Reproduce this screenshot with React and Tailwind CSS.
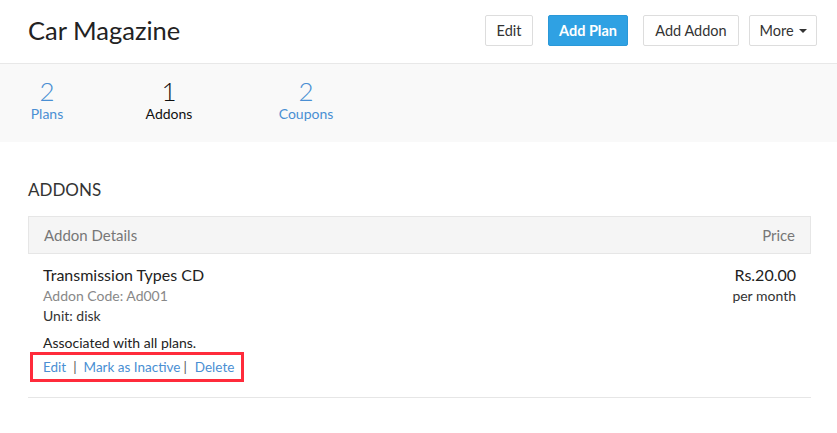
import React from "react";

const font = { fontFamily: "Lato, 'Open Sans', Arial, sans-serif" };

const stats = [
  { value: 2, label: "Plans", active: false, width: "w-[44px]", ml: "ml-[25px]" },
  { value: 1, label: "Addons", active: true, width: "w-[60px]", ml: "ml-[70px]" },
  { value: 2, label: "Coupons", active: false, width: "w-[70px]", ml: "ml-[72px]" },
];

const App = () => {
  return (
    <div className="w-[837px] h-[433px] bg-white text-[#222]" style={font}>
      {/* Header */}
      <div className="h-[64px] pb-[2px] flex items-center border-b border-[#e8e8e8] pl-[28px] pr-[20px]">
        <h1 className="text-[25.5px] leading-none text-[#222] flex-1">Car Magazine</h1>
        <button className="w-[48px] h-[31px] border border-[#dddddd] rounded-[2px] bg-white text-[14.5px] text-[#333]">
          Edit
        </button>
        <button className="ml-[15px] w-[80px] h-[31px] rounded-[2px] bg-[#2fa1e3] border border-[#2a98d8] text-[14.5px] font-bold text-white">
          Add Plan
        </button>
        <button className="ml-[15px] w-[96px] h-[31px] border border-[#dddddd] rounded-[2px] bg-white text-[14.5px] text-[#333]">
          Add Addon
        </button>
        <button className="ml-[10px] w-[68px] h-[31px] border border-[#dddddd] rounded-[2px] bg-white text-[14.5px] text-[#333] flex items-center justify-center gap-[5px]">
          More
          <span className="w-0 h-0 border-l-[4px] border-r-[4px] border-t-[4px] border-l-transparent border-r-transparent border-t-[#333] mt-[1px]" />
        </button>
      </div>

      {/* Stats */}
      <div className="h-[78px] bg-[#f9f9f9] flex pt-[13px]">
        {stats.map((s) => (
          <div key={s.label} className={`${s.width} ${s.ml} flex flex-col items-center`}>
            <span className={`text-[26px] leading-[28px] font-light ${s.active ? "text-[#111]" : "text-[#4a8fd3]"}`}>
              {s.value}
            </span>
            <span className={`text-[14px] leading-[18px] ${s.active ? "text-[#111]" : "text-[#4a8fd3]"}`}>
              {s.label}
            </span>
          </div>
        ))}
      </div>

      {/* Addons */}
      <div className="px-[28px] pr-[26px] pt-[38px]">
        <h2 className="text-[17px] leading-[20px] text-[#333] uppercase">Addons</h2>

        <div className="mt-[16px] border border-[#e6e6e6] bg-[#f5f5f5] h-[38px] flex items-center justify-between px-[15px] text-[15px] text-[#777]">
          <span>Addon Details</span>
          <span>Price</span>
        </div>

        <div className="border-b border-[#e6e6e6] flex justify-between pl-[15px] pr-[15px] pt-[10px] pb-[15px]">
          <div className="flex flex-col">
            <span className="text-[16px] leading-[22px] text-[#222]">Transmission Types CD</span>
            <span className="text-[14px] leading-[20px] text-[#888]">Addon Code: Ad001</span>
            <span className="text-[14px] leading-[20px] text-[#333]">Unit: disk</span>
            <span className="mt-[8px] text-[14px] leading-[18px] text-[#222]">Associated with all plans.</span>
            <div className="-ml-[13px] self-start border-[3px] border-[#ff2b3b] pl-[10px] pr-[7px] h-[30px] flex items-center text-[13.5px] text-[#4a8fd3]">
              <span>Edit</span>
              <span className="mx-[7px] text-[#555]">|</span>
              <span>Mark as Inactive</span>
              <span className="ml-[3px] mr-[8px] text-[#555]">|</span>
              <span>Delete</span>
            </div>
          </div>
          <div className="flex flex-col items-end">
            <span className="text-[16px] leading-[22px] text-[#222]">Rs.20.00</span>
            <span className="text-[14px] leading-[20px] text-[#333]">per month</span>
          </div>
        </div>
      </div>
    </div>
  );
};

export default App;
